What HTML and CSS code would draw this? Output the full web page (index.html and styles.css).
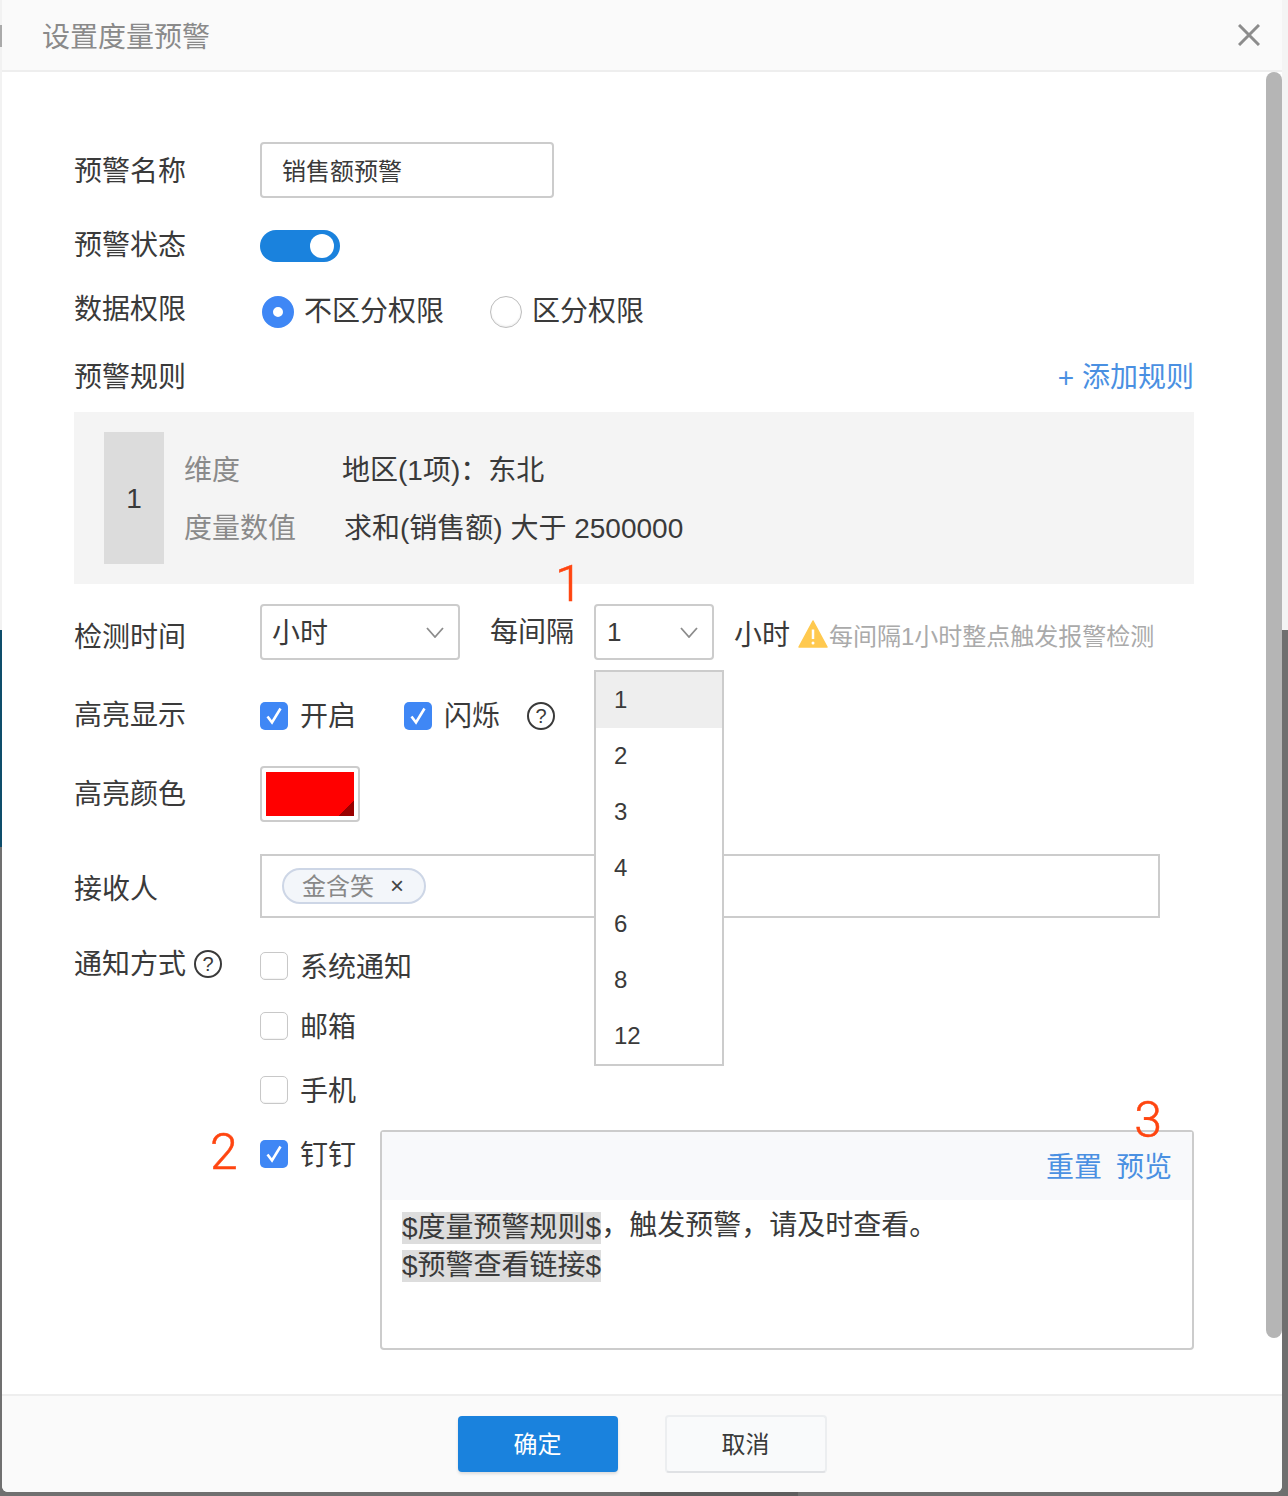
FILE: index.html
```html
<!DOCTYPE html>
<html lang="zh-CN">
<head>
<meta charset="utf-8">
<title>设置度量预警</title>
<link rel="stylesheet" href="styles.css">
</head>
<body>
<div class="modal">
  <header class="modal-head">
    <h1 class="title">设置度量预警</h1>
    <svg class="close" viewBox="0 0 22 22" width="22" height="22"><path d="M1 1 21 21M21 1 1 21"/></svg>
  </header>
  <div class="modal-body">
    <div class="scrollbar"></div>
    <form class="form">
      <div class="row row-name">
        <span class="label">预警名称</span>
        <div class="input">销售额预警</div>
      </div>
      <div class="row row-status">
        <span class="label">预警状态</span>
        <span class="toggle"><i class="knob"></i></span>
      </div>
      <div class="row row-rights">
        <span class="label label-up">数据权限</span>
        <span class="radio on"></span><span class="radio-text">不区分权限</span>
        <span class="radio"></span><span class="radio-text">区分权限</span>
      </div>
      <div class="row row-rules">
        <span class="label">预警规则</span>
        <a class="add-rule">+ 添加规则</a>
      </div>
      <div class="rule">
        <div class="rule-num">1</div>
        <div class="rule-info">
          <div class="rule-line"><span class="rule-key">维度</span><span class="rule-val">地区(1项)：东北</span></div>
          <div class="rule-line"><span class="rule-key">度量数值</span><span class="rule-val val-shift">求和(销售额) 大于 2500000</span></div>
        </div>
      </div>
      <div class="row row-time">
        <span class="label label-down">检测时间</span>
        <div class="select select-unit">小时
          <svg class="chev" viewBox="0 0 18 11" width="18" height="11"><path d="M1 1 9 10 17 1"/></svg>
        </div>
        <span class="every">每间隔</span>
        <div class="select-wrap">
          <span class="mark mark-1">1</span>
          <div class="select select-num"><span class="num">1</span>
            <svg class="chev" viewBox="0 0 18 11" width="18" height="11"><path d="M1 1 9 10 17 1"/></svg>
          </div>
          <ul class="dropdown">
            <li class="active">1</li><li>2</li><li>3</li><li>4</li><li>6</li><li>8</li><li>12</li>
          </ul>
        </div>
        <span class="unit">小时</span>
        <svg class="warn" viewBox="0 0 30 28" width="30" height="28"><path d="M15 1 29 27H1Z" fill="#ffc94f" stroke="#ffc94f" stroke-width="1.5" stroke-linejoin="round"/><path d="M15 9.500V19" stroke="#fff" stroke-width="2.500"/><circle cx="15" cy="23" r="1.500" fill="#fff"/></svg>
        <span class="hint">每间隔1小时整点触发报警检测</span>
      </div>
      <div class="row row-high">
        <span class="label">高亮显示</span>
        <span class="check on"><svg viewBox="0 0 28 28" width="28" height="28"><path d="M7.500 14.500 12 20.500 20.500 6.500"/></svg></span>
        <span class="check-text t-open">开启</span>
        <span class="check on"><svg viewBox="0 0 28 28" width="28" height="28"><path d="M7.500 14.500 12 20.500 20.500 6.500"/></svg></span>
        <span class="check-text t-blink">闪烁</span>
        <span class="help">?</span>
      </div>
      <div class="row row-color">
        <span class="label">高亮颜色</span>
        <div class="swatch"><div class="swatch-fill"></div></div>
      </div>
      <div class="row row-recv">
        <span class="label">接收人</span>
        <div class="recv"><span class="tag">金含笑<span class="tag-x">×</span></span></div>
      </div>
      <div class="notify">
        <div class="notify-label"><span class="label-inline">通知方式</span><span class="help">?</span></div>
        <div class="notify-list">
          <div class="notify-item"><span class="check"></span><span class="check-text">系统通知</span></div>
          <div class="notify-item item-mail"><span class="check"></span><span class="check-text">邮箱</span></div>
          <div class="notify-item item-phone"><span class="check"></span><span class="check-text">手机</span></div>
          <div class="notify-ding">
            <span class="mark mark-2">2</span>
            <div class="notify-item ding-opt"><span class="check on"><svg viewBox="0 0 28 28" width="28" height="28"><path d="M7.500 14.500 12 20.500 20.500 6.500"/></svg></span><span class="check-text">钉钉</span></div>
            <div class="editor">
              <span class="mark mark-3">3</span>
              <div class="editor-head"><a class="link">重置</a><a class="link">预览</a></div>
              <div class="editor-body">
                <div class="editor-line"><span class="var">$度量预警规则$</span>，触发预警，请及时查看。</div>
                <div class="editor-line"><span class="var">$预警查看链接$</span></div>
              </div>
            </div>
          </div>
        </div>
      </div>
    </form>
  </div>
  <footer class="modal-foot">
    <button class="btn btn-ok" type="button">确定</button>
    <button class="btn btn-cancel" type="button">取消</button>
  </footer>
</div>
</body>
</html>
```
FILE: styles.css
```css
* { box-sizing: border-box; }
html, body { margin: 0; padding: 0; }
body {
  width: 1288px;
  height: 1496px;
  overflow: hidden;
  font-family: "Liberation Sans", "Noto Sans CJK SC", sans-serif;
  color: #3a3a3a;
  font-size: 28px;
  background:
    linear-gradient(#5e5e5e, #5e5e5e) 640px 1492px / 158px 4px no-repeat,
    linear-gradient(to bottom, #f4f4f4 0, #f4f4f4 630px, #6f6f6f 630px, #6f6f6f 100%) right top / 6px 100% no-repeat,
    linear-gradient(to bottom, #f2f2f2 0, #f2f2f2 25px, #aaa 25px, #aaa 47px, #f2f2f2 47px, #f2f2f2 630px, #0e4d6b 630px, #0e4d6b 847px, #707070 847px, #707070 100%);
}
.modal {
  margin-left: 2px;
  width: 1280px;
  height: 1492px;
  background: #fff;
  border-radius: 0 0 6px 6px;
  display: flex;
  flex-direction: column;
  overflow: hidden;
}
.modal-head {
  height: 72px;
  flex: none;
  background: #fafafa;
  border-bottom: 2px solid #eee;
  display: flex;
  align-items: center;
  justify-content: space-between;
  padding: 0 22px 0 40px;
}
.title { margin: 0; font-size: 28px; font-weight: 400; color: #8a8a8a; }
.close { fill: none; stroke: #8c8c8c; stroke-width: 3; }
.modal-body { position: relative; flex: 1; overflow: hidden; }
.scrollbar {
  position: absolute;
  top: 0;
  right: 0;
  width: 16px;
  height: 1266px;
  background: #b5b5b5;
  border-radius: 8px;
}
.form { padding: 70px 0 0 72px; }
.row { display: flex; align-items: center; }
.label { width: 186px; flex: none; line-height: 40px; }
.label-up { margin-top: -5px; }
.label-down { margin-top: 12px; }
.row-name .label { margin-top: 4px; }
.input {
  width: 294px;
  height: 56px;
  border: 2px solid #ccc;
  border-radius: 4px;
  padding-left: 20px;
  font-size: 24px;
  line-height: 56px;
}
.row-status { margin-top: 32px; height: 32px; }
.row-status .label { margin-top: 0; }
.toggle {
  width: 80px;
  height: 32px;
  border-radius: 16px;
  background: #1a82dd;
  display: flex;
  align-items: center;
  justify-content: flex-end;
  padding-right: 6px;
}
.knob { width: 24px; height: 24px; border-radius: 50%; background: #fff; }
.row-rights { margin-top: 34px; height: 32px; }
.radio {
  width: 32px;
  height: 32px;
  margin-left: 2px;
  border-radius: 50%;
  border: 1px solid #bdbdbd;
  background: #fff;
  box-shadow: inset 0 -1px 2px rgba(0, 0, 0, 0.08);
  flex: none;
}
.radio.on { border: 11px solid #3f87f5; box-shadow: none; }
.radio-text { margin-left: 10px; margin-right: 44px; line-height: 40px; }
.row-rules { margin-top: 32px; height: 32px; width: 1120px; justify-content: space-between; }
.row-rules .label { margin-top: 4px; }
.add-rule { color: #4a90e2; line-height: 40px; margin-top: 4px; }
.rule {
  margin-top: 20px;
  width: 1120px;
  height: 172px;
  background: #f4f4f4;
  padding: 20px 30px;
  display: flex;
}
.rule-num {
  width: 60px;
  height: 132px;
  background: #dcdcdc;
  text-align: center;
  line-height: 134px;
}
.rule-info { margin-left: 20px; padding-top: 10px; }
.rule-line { height: 58px; line-height: 58px; display: flex; }
.rule-key { width: 158px; color: #8a8a8a; }
.val-shift { margin-left: 2px; }
.row-time { margin-top: 20px; height: 56px; }
.select {
  height: 56px;
  border: 2px solid #ccc;
  border-radius: 4px;
  background: #fff;
  display: flex;
  align-items: center;
  justify-content: space-between;
  padding: 0 14px 0 10px;
  line-height: 52px;
}
.select-unit { width: 200px; padding-top: 4px; }
.select-unit .chev { margin-top: -4px; }
.select-num { width: 120px; padding-left: 11px; }
.num { font-size: 26px; }
.chev { fill: none; stroke: #8c8c8c; stroke-width: 1.8; }
.every { margin-left: 30px; margin-top: 2px; width: 104px; line-height: 56px; }
.select-wrap { position: relative; width: 120px; }
.dropdown {
  position: absolute;
  z-index: 3;
  left: 0;
  top: 66px;
  width: 130px;
  margin: 0;
  padding: 0;
  list-style: none;
  background: #fff;
  border: 2px solid #ccc;
  font-size: 24px;
}
.dropdown li { height: 56px; line-height: 56px; padding-left: 18px; }
.dropdown .active { background: #eee; }
.unit { margin-left: 20px; margin-top: 8px; line-height: 40px; }
.warn { margin-left: 8px; flex: none; margin-top: 4px; }
.hint { margin-left: 1px; font-size: 24px; color: #aaa; margin-top: 4px; }
.row-high { margin-top: 36px; height: 40px; }
.check {
  width: 28px;
  height: 28px;
  flex: none;
  display: block;
  border-radius: 5px;
  border: 1px solid #c8c8c8;
  background: #fff;
  box-shadow: inset 0 -1px 1px rgba(0, 0, 0, 0.05);
}
.check.on { border: 0; background: #3f87f5; box-shadow: none; }
.check svg { display: block; fill: none; stroke: #fff; stroke-width: 2.6; }
.check-text { margin-left: 12px; line-height: 40px; padding-top: 4px; }
.t-open { margin-right: 48px; padding-top: 2px; }
.t-blink { margin-right: 27px; padding-top: 2px; }
.help {
  width: 28px;
  height: 28px;
  flex: none;
  border: 2px solid #3a3a3a;
  border-radius: 50%;
  font-size: 20px;
  line-height: 24px;
  text-align: center;
  display: inline-block;
}
.row-color { margin-top: 30px; height: 56px; }
.row-color .label { margin-top: 2px; }
.swatch {
  width: 100px;
  height: 56px;
  border: 2px solid #ccc;
  border-radius: 4px;
  padding: 4px;
}
.swatch-fill {
  width: 88px;
  height: 44px;
  background: linear-gradient(135deg, #f00 0, #f00 calc(100% - 11px), #990000 calc(100% - 11px));
}
.row-recv { margin-top: 32px; height: 64px; }
.row-recv .label { margin-top: 8px; }
.recv {
  width: 900px;
  height: 64px;
  border: 2px solid #ccc;
  padding: 12px 0 0 20px;
}
.tag {
  display: inline-flex;
  align-items: center;
  height: 36px;
  width: 144px;
  padding: 0 0 4px 18px;
  border: 2px solid #cdd6e6;
  border-radius: 18px;
  background: #f3f6fa;
  font-size: 24px;
  color: #888;
}
.tag-x { margin-left: 16px; margin-top: 4px; color: #444; }
.notify { margin-top: 34px; display: flex; }
.notify-label {
  width: 186px;
  flex: none;
  height: 28px;
  display: flex;
  align-items: center;
}
.label-inline { margin-right: 8px; line-height: 28px; margin-top: -2px; }
.notify-label .help { margin-top: -4px; }
.notify-item { display: flex; align-items: center; height: 28px; }
.item-mail { margin-top: 32px; }
.item-phone { margin-top: 36px; }
.notify-ding { position: relative; margin-top: 26px; display: flex; }
.ding-opt { width: 120px; flex: none; margin-top: 10px; }
.editor {
  position: relative;
  width: 814px;
  height: 220px;
  border: 2px solid #ccc;
  border-radius: 4px;
}
.editor-head {
  height: 68px;
  background: #f8f9fb;
  display: flex;
  align-items: center;
  justify-content: flex-end;
  gap: 14px;
  padding: 0 20px 0 0;
}
.link { color: #4a90e2; line-height: 40px; margin-top: 4px; }
.editor-body { padding: 7px 20px 0; }
.editor-line { height: 38px; line-height: 38px; }
.var { display: inline-block; height: 32px; line-height: 32px; background: #ddd; vertical-align: middle; }
.mark {
  position: absolute;
  z-index: 4;
  color: #ff4510;
  font-family: "Roboto", "Liberation Sans", sans-serif;
  font-weight: 300;
  font-size: 50px;
  line-height: 50px;
  -webkit-text-stroke: 0.5px #ff4510;
}
.mark-1 { left: -39px; top: -45px; }
.mark-2 { left: -50px; top: -3px; }
.mark-3 { right: 30px; top: -37px; }
.modal-foot {
  height: 98px;
  flex: none;
  background: #fafafa;
  border-top: 2px solid #eee;
  display: flex;
  align-items: center;
  justify-content: center;
  gap: 47px;
}
.btn {
  font-family: inherit;
  font-size: 24px;
  border-radius: 4px;
  padding: 0 0 4px;
}
.btn-ok {
  width: 160px;
  height: 56px;
  background: #1a82dd;
  color: #fff;
  border: 0;
  box-shadow: 0 2px 3px rgba(0, 0, 0, 0.12);
}
.btn-cancel {
  width: 162px;
  height: 58px;
  background: #f9fafb;
  color: #3a3a3a;
  border: 2px solid #eceef0;
  border-bottom-color: #dfe1e4;
}
```
